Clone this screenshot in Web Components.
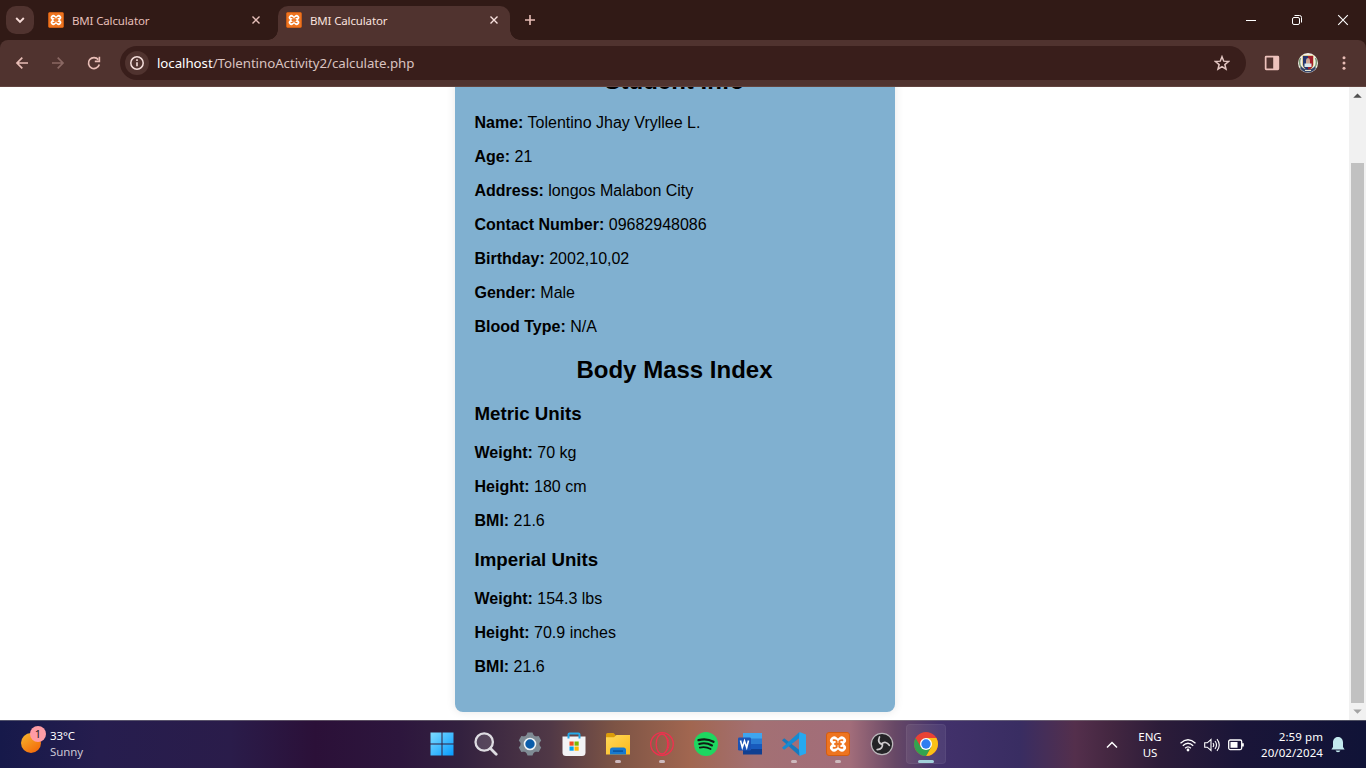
<!DOCTYPE html>
<html lang="en">
<head>
<meta charset="utf-8">
<title>BMI Calculator</title>
<style>
html,body{margin:0;height:100%;overflow:hidden;background:#fff}
</style>
</head>
<body>
<desktop-screen></desktop-screen>
<script>
const ICONS = {
  down: '<path d="M4.200 6 8 9.800 11.800 6" fill="none" stroke="#f7dcd8" stroke-width="1.900"/>',
  close: '<path d="M4 4l8 8M12 4l-8 8" fill="none" stroke="currentColor" stroke-width="1.600"/>',
  plus: '<path d="M8 3v10M3 8h10" stroke="#e8bdb6" stroke-width="1.600"/>',
  back: '<path d="M14 8H3M8.300 2.700 3 8l5.300 5.300" fill="none" stroke="#e8bdb6" stroke-width="1.700"/>',
  forward: '<path d="M2 8h11M7.700 2.700 13 8l-5.300 5.300" fill="none" stroke="#8a6863" stroke-width="1.700"/>',
  reload: '<path d="M13.300 9.500A5.500 5.500 0 1 1 12.300 4.600" fill="none" stroke="#e8bdb6" stroke-width="1.700"/><path d="M14.200 1.800v5.400H8.800V5.600h3.800V1.800z" fill="#e8bdb6"/>',
  info: '<circle cx="8" cy="8" r="6.200" fill="none" stroke="#f4dedb" stroke-width="1.500"/><path d="M8 7.200v4M8 4.300v1.700" stroke="#f4dedb" stroke-width="1.600"/>',
  star: '<path d="m8 1.700 1.750 4.450 4.750.35-3.650 3.050 1.150 4.650L8 11.650 4 14.200l1.150-4.650L1.500 6.500l4.750-.35z" fill="none" stroke="#e2c5c1" stroke-width="1.500"/>',
  panel: '<path d="M2.200.8h11.600q1.400 0 1.400 1.400v11.600q0 1.400-1.400 1.400H2.200Q.8 15.200.8 13.800V2.200Q.8.8 2.200.8zM2.500 2.500v11h6.700v-11z" fill="#edc2bc" fill-rule="evenodd"/>',
  more: '<g fill="#e8bdb6"><circle cx="8" cy="2.700" r="1.500"/><circle cx="8" cy="8" r="1.500"/><circle cx="8" cy="13.300" r="1.500"/></g>',
  minimize: '<path d="M3 8.500h10" stroke="#fff"/>',
  restore: '<rect x="3.500" y="5.500" width="7" height="7" rx="1.500" fill="none" stroke="#fff"/><path d="M5.500 3.500h5q2 0 2 2v5" fill="none" stroke="#fff"/>',
  winclose: '<path d="M3.200 3.200l9.600 9.600M12.800 3.200l-9.600 9.600" stroke="#fff" stroke-width="1.100"/>',
  avatar: '<circle cx="10" cy="10" r="10" fill="#f2f1e8"/><path d="M2.500 5q-2.200 5 .8 9.500M17.500 5q2.200 5-.8 9.500" stroke="#7c9a77" stroke-width="1.500" fill="none"/><path d="M4.500 2.500h11v9.500q-1.500 4.500-5.500 5.500-4-1-5.500-5.500z" fill="#c9a94b"/><path d="M5 3h5v14q-4-1-5-5z" fill="#24356f"/><path d="M10 3h5v9q-1 4-5 5z" fill="#a0202c"/><path d="M8 11V7.500Q8 5 10 5t2 2.500V11z" fill="#cfa795"/><path d="M6.500 10.500h7v3.500h-7z" fill="#d7e9ee"/><path d="M3 13.500q3 3 7 3t7-3l.8 2q-3 4-7.800 4t-7.800-4z" fill="#35456a"/><path d="M7 17.500h6" stroke="#e8e5cf"/>',
  xampp: '<rect x=".5" y=".5" width="23" height="23" rx="2.500" fill="#ee7420" stroke="#d45d10"/><path d="M8.100 8.400 15.900 15.600M15.900 8.400 8.100 15.600" stroke="#fff" stroke-width="8" stroke-linecap="round"/><path d="M7.600 8.200q3.200-.3 3.200 1.900 0 1.900-2.300 1.900 2.300 0 2.300 1.900 0 2.200-3.200 1.900M16.400 8.200q-3.200-.3-3.200 1.900 0 1.900 2.300 1.900-2.300 0-2.300 1.900 0 2.200 3.200 1.900M9 12h6" fill="none" stroke="#ee7420" stroke-width="1.900" stroke-linecap="round"/>',
  weather: '<defs><linearGradient id="s" x1="0" y1="0" x2=".7" y2="1"><stop stop-color="#f7b92e"/><stop offset="1" stop-color="#f36b0b"/></linearGradient></defs><circle cx="10" cy="17" r="10" fill="url(#s)"/>',
  start: '<defs><linearGradient id="s" x1="0" y1="0" x2="1" y2="1"><stop stop-color="#7fdcff"/><stop offset="1" stop-color="#069bff"/></linearGradient></defs><path d="M.500.500h11v11H.500zM12.500.500h11v11h-11zM.500 12.500h11v11H.500zM12.500 12.500h11v11h-11z" fill="url(#s)"/>',
  search: '<circle cx="10.200" cy="10" r="8.700" fill="#fff" fill-opacity=".14" stroke="#dedce2" stroke-width="2.300"/><path d="m16.500 16.500 5.700 5.700" stroke="#dedce2" stroke-width="2.800" stroke-linecap="round"/>',
  gear: '<g fill="#7f8b94"><circle cx="12" cy="12" r="9.500"/><path id="t" d="M8 4 9.500.500h5L16 4v16l-1.500 3.500h-5L8 20z"/><use href="#t" transform="rotate(60 12 12)"/><use href="#t" transform="rotate(120 12 12)"/></g><circle cx="12" cy="12" r="5.500" fill="#095caa" stroke="#eef3f6" stroke-width="1.600"/>',
  store: '<path d="M.5 4.500h23v16q0 3.500-3.500 3.500H4Q.5 24 .5 20.500z" fill="#f3f3f5"/><path d="M5.500 6.500V2.500q0-2 2-2h9q2 0 2 2v4h-2V2.500h-9v4z" fill="#25a9e8"/><path d="M7.500 9.500h4.200v4.200H7.500z" fill="#f04e24"/><path d="M12.500 9.500h4.200v4.200h-4.200z" fill="#7db800"/><path d="M7.500 14.500h4.200v4.200H7.500z" fill="#00a3ee"/><path d="M12.500 14.500h4.200v4.200h-4.200z" fill="#fdb900"/>',
  folder: '<path d="M0 2.500Q0 1 1.500 1h6L10 3.500V8H0z" fill="#dc9c0a"/><defs><linearGradient id="s" x1="0" y1="0" x2="1" y2="1"><stop stop-color="#ffd95a"/><stop offset="1" stop-color="#fbb91c"/></linearGradient></defs><path d="M0 5.300h8L10.500 3H24v19.500H0z" fill="url(#s)"/><path d="M4 22.500V18q0-2.500 2.500-2.500h11q2.500 0 2.500 2.500v4.500z" fill="#1779ce"/><path d="M7 18.300h10v1.600H7z" fill="#0854a0"/>',
  opera: '<g fill="none" stroke="#f0304f"><circle cx="12" cy="12" r="11.300" stroke-width="1.300"/><ellipse cx="12" cy="12" rx="5.800" ry="10" stroke-width="1.300"/><path d="M14.500 3.500q4.500 3 4.500 8.500t-4.500 8.500" stroke-width="1"/></g>',
  spotify: '<circle cx="12" cy="12" r="12" fill="#1ed760"/><g fill="none" stroke="#101b14" stroke-linecap="round"><path d="M4.500 8.200q8-2.200 15 1.600" stroke-width="2.300"/><path d="M5.200 12q6.800-1.800 12.800 1.500" stroke-width="2"/><path d="M5.800 15.600q5.800-1.300 10.800 1.400" stroke-width="1.700"/></g>',
  word: '<path d="M5 1h19v6H5z" fill="#3fa5ef"/><path d="M5 6.500h19V12H5z" fill="#2b7cd3"/><path d="M5 12h19v5.500H5z" fill="#185abd"/><path d="M5 17h19v5.500H5z" fill="#103f91"/><rect y="5.500" width="13" height="13" rx="1.200" fill="#1b53b5"/><path d="m2.500 8.500 1.800 7 2.200-6.500 2.200 6.500 1.800-7" fill="none" stroke="#fff" stroke-width="1.600"/>',
  code: '<path d="M0 8.200 2.200 6.300 18 18.500 17.500 24z" fill="#1879bd"/><path d="M0 15.800 17.500 0l.5 5.500L2.200 17.700z" fill="#168bd2"/><path d="m17.500 0 6.500 2.600v18.800L17.500 24l-.5-6V6z" fill="#27a9ef"/>',
  obs: '<circle cx="12" cy="12" r="10.700" fill="#242326" stroke="#bdb9bd" stroke-width="1.200"/><g fill="none" stroke="#d0cccf" stroke-width="1.700" stroke-linecap="round"><path id="a" d="M12 12.500q-5-2-2.500-7.500"/><use href="#a" transform="rotate(120 12 12)"/><use href="#a" transform="rotate(240 12 12)"/></g>',
  chrome: '<circle cx="12" cy="12" r="12" fill="#e94235"/><path d="M12 6h10.390A12 12 0 0 1 12 24l5.200-9z" fill="#fbc116"/><path d="M17.200 15 12 24A12 12 0 0 1 1.610 6L6.800 15z" fill="#32a350"/><circle cx="12" cy="12" r="6" fill="#fff"/><circle cx="12" cy="12" r="4.700" fill="#2f7df0"/>',
  up: '<path d="m3 10.500 5-5 5 5" fill="none" stroke="#fff" stroke-width="1.500"/>',
  wifi: '<g fill="none" stroke="#fff" stroke-width="1.300"><path d="M.5 6.200q7.500-7 15 0M2.800 8.800q5.200-5 10.400 0M5.100 11.300q2.900-2.800 5.800 0"/></g><circle cx="8" cy="13" r="1.400" fill="#fff"/>',
  sound: '<g fill="none" stroke="#fff" stroke-width="1.100"><path d="M.7 5.800h2.600L7 2.500v11l-3.700-3.300H.7z"/><path d="M9 6q1.500 2 0 4M11 4q3 4 0 8M13 2.200q4.500 5.800 0 11.600"/></g>',
  battery: '<rect x=".7" y="3" width="13" height="9.600" rx="1.500" fill="none" stroke="#fff" stroke-width="1.300"/><path d="M2.500 5h7v5.700h-7zM14 6.200h1.800v3.300H14z" fill="#fff"/>',
  bell: '<path d="M7 0c3.300 0 5 2.500 5 5.500V10l1.600 2.500H.4L2 10V5.500C2 2.500 3.700 0 7 0zM4.600 13.500h4.800q-.4 1.800-2.400 1.800t-2.400-1.800z" fill="#c3e9ee"/>',
  arrowup: '<path d="M4 10 8 6l4 4z" fill="#505050"/>',
  arrowdown: '<path d="M4 6 8 10l4-4z" fill="#a3a3a3"/>'
};
const BOX = {xampp:24,start:24,search:24,gear:24,store:24,folder:24,opera:24,spotify:24,word:24,code:24,obs:24,chrome:24,avatar:20};

function define(name, html) {
  customElements.define(name, class extends HTMLElement {
    connectedCallback() {
      if (this.shadowRoot) return;
      const root = this.attachShadow({mode: 'open'});
      const t = document.createElement('template');
      t.innerHTML = typeof html === 'function' ? html(this) : html;
      root.append(t.content.cloneNode(true));
    }
  });
}

define('glyph-icon', el => {
  const n = el.getAttribute('name');
  const s = +(el.getAttribute('size') || 16);
  const b = n === 'weather' ? '0 7 20 20' : n === 'bell' ? '0 0 14 16' : `0 0 ${BOX[n] || 16} ${BOX[n] || 16}`;
  return `<style>:host{display:block;flex:none;width:${n === 'bell' ? 14 : s}px;height:${s}px}svg{display:block;width:100%;height:100%}</style><svg viewBox="${b}">${ICONS[n]}</svg>`;
});

define('browser-tab', `<style>
:host{display:flex;align-items:center;box-sizing:border-box;width:232px;height:34px;margin-top:6px;padding:0 9px 6px 8px;font:11.500px "Noto Sans",sans-serif;letter-spacing:-.15px;color:#e6bfb9;position:relative}
:host([active]){background:#50332f;color:#f9e2df;border-radius:10px 10px 0 0}
:host([active])::before,:host([active])::after{content:"";position:absolute;bottom:0;width:10px;height:10px}
:host([active])::before{left:-10px;background:radial-gradient(circle at 0 0,transparent 9.500px,#50332f 10px)}
:host([active])::after{right:-10px;background:radial-gradient(circle at 100% 0,transparent 9.500px,#50332f 10px)}
.t{flex:1;margin-left:8px;white-space:nowrap}
</style><glyph-icon name="xampp" size="16"></glyph-icon><span class="t"><slot></slot></span><glyph-icon name="close" size="14"></glyph-icon>`);

define('tab-strip', `<style>
:host{display:flex;height:40px;background:#311a16}
.menu{width:28px;height:28px;margin:6px;border-radius:10px;background:#50332f;display:grid;place-items:center}
browser-tab+browser-tab{margin-left:6px}
.plus{margin:12px 0 0 12px}
.win{margin:12px 15px 0 auto;display:flex;gap:30px}
</style><div class="menu"><glyph-icon name="down"></glyph-icon></div>
<browser-tab>BMI Calculator</browser-tab><browser-tab active>BMI Calculator</browser-tab>
<glyph-icon class="plus" name="plus"></glyph-icon>
<div class="win"><glyph-icon name="minimize"></glyph-icon><glyph-icon name="restore"></glyph-icon><glyph-icon name="winclose"></glyph-icon></div>`);

define('address-bar', `<style>
:host{display:block;background:#311a16}
.bar{display:flex;align-items:center;box-sizing:border-box;height:47px;padding:0 14px;background:#50332f;border-radius:8px 8px 0 0;border-bottom:1px solid #62443f}
.nav{display:flex;gap:20px;width:106px}
.field{display:flex;align-items:center;box-sizing:border-box;width:1126px;height:34px;padding:0 16px 0 5px;border-radius:17px;background:#391e1b;font:13.300px "Noto Sans",sans-serif;color:#d9c3c0}
.site{display:grid;place-items:center;width:24px;height:24px;border-radius:50%;background:#50332f;margin-right:8px}
.url{flex:1;white-space:nowrap;letter-spacing:-.06px}b{font-weight:400;color:#fff}
.right{display:flex;align-items:center;margin-left:18px;gap:18px}
</style><div class="bar"><div class="nav"><glyph-icon name="back"></glyph-icon><glyph-icon name="forward"></glyph-icon><glyph-icon name="reload"></glyph-icon></div>
<div class="field"><span class="site"><glyph-icon name="info"></glyph-icon></span><span class="url"><b>localhost</b>/TolentinoActivity2/calculate.php</span><glyph-icon name="star"></glyph-icon></div>
<div class="right"><glyph-icon name="panel" size="16"></glyph-icon><glyph-icon name="avatar" size="20"></glyph-icon><glyph-icon name="more"></glyph-icon></div></div>`);

define('info-row', el => `<style>:host{display:block;margin:16px 0;line-height:18px}</style><strong>${el.getAttribute('label')}:</strong> <slot></slot>`);

define('info-card', `<style>
:host{display:flow-root;flex:none;box-sizing:border-box;width:440px;padding:20px;margin-bottom:8px;background:#80b0d0;border-radius:8px;box-shadow:0 0 10px rgba(0,0,0,.1);font:16px "Liberation Sans",Arial,sans-serif;color:#000}
h2{font-size:24px;line-height:27px;margin:20px 0;text-align:center}
h3{font-size:18.720px;line-height:22px;margin:19px 0}
</style><h2>Student Info</h2>
<info-row label="Name">Tolentino Jhay Vryllee L.</info-row>
<info-row label="Age">21</info-row>
<info-row label="Address">longos Malabon City</info-row>
<info-row label="Contact Number">09682948086</info-row>
<info-row label="Birthday">2002,10,02</info-row>
<info-row label="Gender">Male</info-row>
<info-row label="Blood Type">N/A</info-row>
<h2>Body Mass Index</h2>
<h3>Metric Units</h3>
<info-row label="Weight">70 kg</info-row>
<info-row label="Height">180 cm</info-row>
<info-row label="BMI">21.6</info-row>
<h3>Imperial Units</h3>
<info-row label="Weight">154.3 lbs</info-row>
<info-row label="Height">70.9 inches</info-row>
<info-row label="BMI">21.6</info-row>`);

define('scroll-bar', `<style>
:host{display:flex;flex-direction:column;align-items:center;width:17px;background:#f1f1f1}
.thumb{width:13px;height:540px;margin-top:59px;background:#c1c1c1}
</style><glyph-icon name="arrowup" size="17"></glyph-icon><div class="thumb"></div><glyph-icon name="arrowdown" size="17"></glyph-icon>`);

define('page-view', `<style>
:host{display:flex;background:#fff;overflow:hidden;min-height:0}
.body{flex:1;display:flex;flex-direction:column;align-items:center;justify-content:flex-end;overflow:hidden}
</style><div class="body"><slot></slot></div><scroll-bar></scroll-bar>`);

define('task-item', el => `<style>
:host{display:grid;place-items:center;box-sizing:border-box;width:40px;height:40px;border-radius:4px;position:relative}
:host([active]){background:rgba(255,255,255,.07);box-shadow:inset 0 0 0 1px rgba(255,255,255,.05)}
:host([open])::after,:host([active])::after{content:"";position:absolute;bottom:1px;left:17px;width:6px;height:3px;border-radius:2px;background:#cdb9bd}
:host([active])::after{left:12px;width:16px;background:#a2d0da}
</style><glyph-icon name="${el.getAttribute('icon')}" size="24"></glyph-icon>`);

define('task-bar', `<style>
:host{display:grid;grid-template-columns:421.500px 524px 1fr;box-sizing:border-box;height:48px;border-top:1px solid rgba(140,140,140,.5);font:11.500px/16px "Noto Sans",sans-serif;color:#fff;
background:linear-gradient(90deg,#16194a 0,#261d4e 100px,#2a1c4a 230px,#2b1038 315px,#2d163d 400px,#33213f 460px,#503846 550px,#7d5445 615px,#a16650 690px,#a37073 755px,#a26d7a 850px,#674866 895px,#42316b 940px,#392d62 1020px,#542f4c 1075px,#442741 1110px,#2c1c39 1160px,#1a1538 1240px,#101337 1366px) border-box}
.weather{display:flex;padding:7px 0 0 21px}
.sun{position:relative;width:20px;height:20px;margin-top:5px}
.badge{position:absolute;left:9px;top:-7px;width:16px;height:16px;border-radius:50%;background:#ff9ca5;color:#222;font-size:11px;text-align:center;line-height:16px}
.txt{margin-left:9px;letter-spacing:-.1px}.txt span{color:#cac6d4}
.apps{display:flex;gap:4px;padding-top:3px}
.apps task-item::part(x){}
.tray{display:flex;align-items:center;padding-right:21px;justify-content:flex-end}
.lang{width:30px;text-align:center;margin:1px 15px 0 15px}
.sys{display:flex;gap:8px}
.clock{text-align:right;width:79px;letter-spacing:.08px;white-space:nowrap;margin-right:8px;display:flex;flex-direction:column}
</style><div class="weather"><div class="sun"><glyph-icon name="weather" size="20"></glyph-icon><span class="badge">1</span></div><div class="txt">33°C<br><span>Sunny</span></div></div>
<div class="apps"><task-item icon="start"></task-item><task-item icon="search"></task-item><task-item icon="gear"></task-item><task-item icon="store"></task-item><task-item icon="folder" open></task-item><task-item icon="opera" open></task-item><task-item icon="spotify"></task-item><task-item icon="word"></task-item><task-item icon="code" open></task-item><task-item icon="xampp" open></task-item><task-item icon="obs"></task-item><task-item icon="chrome" active></task-item></div>
<div class="tray"><glyph-icon name="up"></glyph-icon><div class="lang">ENG<br>US</div><div class="sys"><glyph-icon name="wifi"></glyph-icon><glyph-icon name="sound"></glyph-icon><glyph-icon name="battery"></glyph-icon></div><div class="clock"><span>2:59 pm</span><span>20/02/2024</span></div><glyph-icon name="bell"></glyph-icon></div>`);

define('desktop-screen', `<style>
:host{display:grid;grid-template-rows:40px 47px 633px 48px;width:1366px;height:768px;overflow:hidden}
</style><tab-strip></tab-strip><address-bar></address-bar><page-view><info-card></info-card></page-view><task-bar></task-bar>`);
</script>
</body>
</html>
